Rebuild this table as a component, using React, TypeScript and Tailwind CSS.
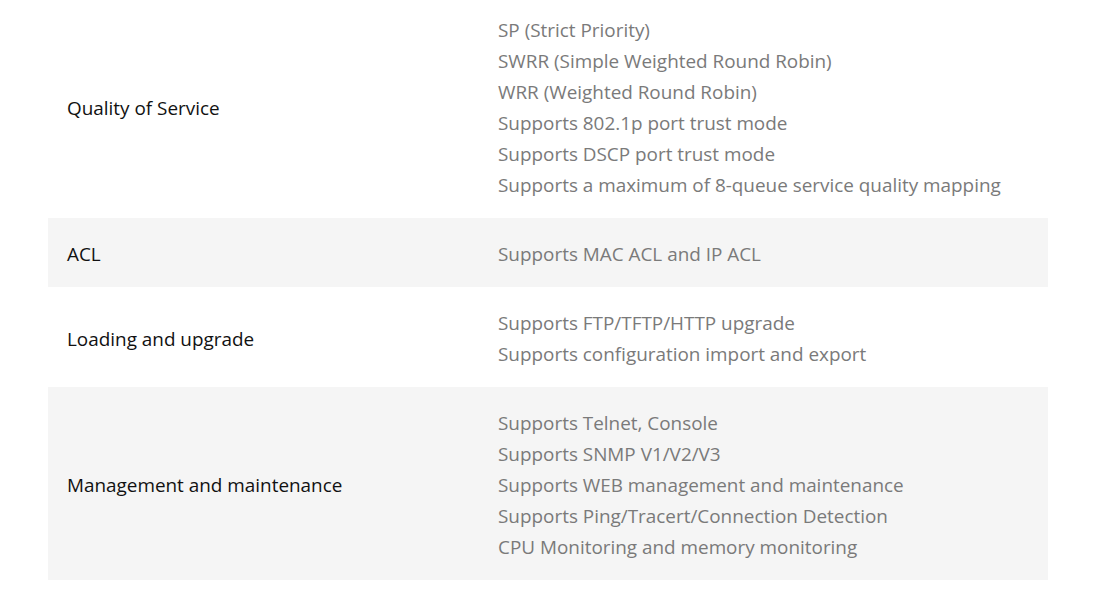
const ROWS: { label: string; items: string[] }[] = [
  {
    label: "Quality of Service",
    items: [
      "SP (Strict Priority)",
      "SWRR (Simple Weighted Round Robin)",
      "WRR (Weighted Round Robin)",
      "Supports 802.1p port trust mode",
      "Supports DSCP port trust mode",
      "Supports a maximum of 8-queue service quality mapping",
    ],
  },
  { label: "ACL", items: ["Supports MAC ACL and IP ACL"] },
  {
    label: "Loading and upgrade",
    items: ["Supports FTP/TFTP/HTTP upgrade", "Supports configuration import and export"],
  },
  {
    label: "Management and maintenance",
    items: [
      "Supports Telnet, Console",
      "Supports SNMP V1/V2/V3",
      "Supports WEB management and maintenance",
      "Supports Ping/Tracert/Connection Detection",
      "CPU Monitoring and memory monitoring",
    ],
  },
];

export default function App() {
  return (
    <div className="min-h-[600px] bg-white font-['Open_Sans',sans-serif] text-[18.9px] leading-[31px]">
      <div className="mx-[48px] -mt-[6px] w-[1000px]">
        {ROWS.map((row, i) => (
          <div
            key={row.label}
            className={`flex items-center pt-[21px] pb-[17px] ${i % 2 === 1 ? "bg-[#f5f5f5]" : "bg-white"}`}
          >
            <div className="w-[450px] shrink-0 pl-[19px] text-[#111]">{row.label}</div>
            <div className="flex-1 pr-[19px] text-[#7a7a7a]">
              {row.items.map((item) => (
                <div key={item}>{item}</div>
              ))}
            </div>
          </div>
        ))}
      </div>
    </div>
  );
}
